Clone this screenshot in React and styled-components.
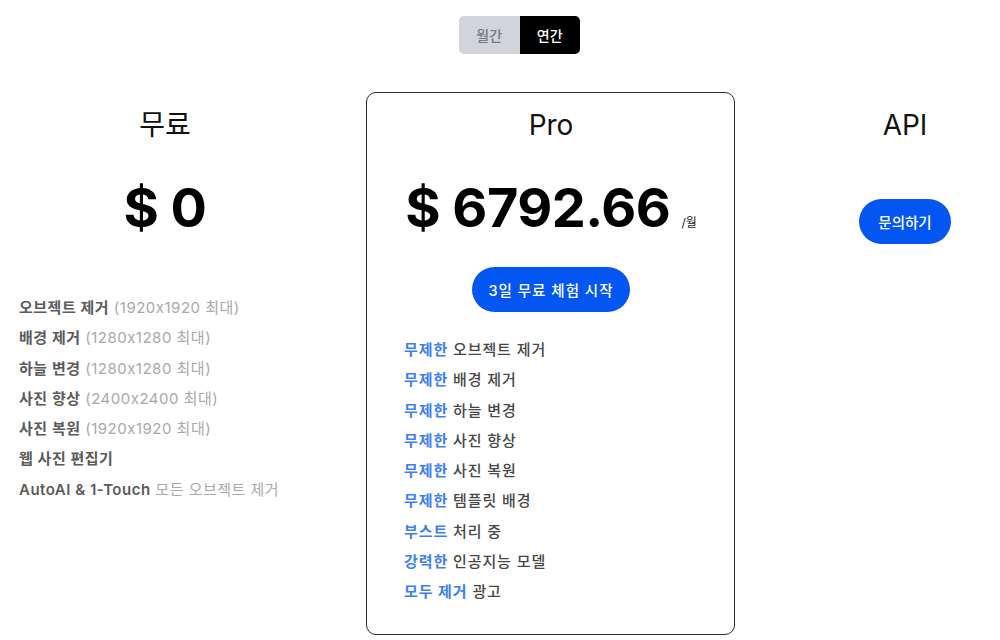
import React, { useState } from "react";
import styled, { createGlobalStyle } from "styled-components";

const GlobalStyle = createGlobalStyle`
  html, body {
    margin: 0;
    padding: 0;
    background: #ffffff;
    overflow: hidden;
  }
  body {
    font-family: Inter, "Noto Sans CJK KR", sans-serif;
    color: #111;
  }
`;

const StyledPage = styled.div`
  width: 1000px;
  height: 640px;
  padding-top: 16px;
  box-sizing: border-box;
  overflow: hidden;
`;

const StyledToggle = styled.div`
  display: flex;
  width: 121px;
  height: 38px;
  margin-left: 459px;
  border-radius: 5px;
  overflow: hidden;
`;

const StyledToggleItem = styled.div`
  flex: 1;
  display: flex;
  align-items: center;
  justify-content: center;
  font-size: 14px;
  font-weight: 500;
  background: ${(p) => (p.$active ? "#000" : "#d1d4da")};
  color: ${(p) => (p.$active ? "#fff" : "#777a80")};
  cursor: pointer;
`;

const StyledColumns = styled.div`
  display: flex;
  align-items: flex-start;
  margin-top: 38px;
`;

const StyledColumn = styled.div`
  width: ${(p) => p.$width}px;
  flex-shrink: 0;
  box-sizing: border-box;
  padding: 16px 0 0 ${(p) => p.$shift || 0}px;
  display: flex;
  flex-direction: column;
  align-items: center;
`;

const StyledCard = styled(StyledColumn)`
  margin-left: 36px;
  border: 1px solid #2b2b2b;
  border-radius: 10px;
  padding: 15px 36px 26px 37px;
`;

const StyledTitle = styled.h2`
  margin: 0;
  font-size: 28px;
  line-height: 34px;
  font-weight: 400;
  color: #111;
`;

const StyledPrice = styled.div`
  margin-top: 32px;
  height: 68px;
  display: flex;
  align-items: baseline;
  white-space: nowrap;
  font-size: 54px;
  line-height: 68px;
  font-weight: 700;
  color: #000;
  letter-spacing: -0.5px;
`;

const StyledPer = styled.span`
  font-size: 12px;
  line-height: 1;
  font-weight: 400;
  letter-spacing: 0;
  margin-left: 11px;
  color: #222;
`;

const StyledButton = styled.button`
  margin-top: ${(p) => p.$top}px;
  height: 45px;
  padding: 0 ${(p) => p.$pad}px;
  border: none;
  border-radius: 23px;
  background: #0356f2;
  color: #fff;
  font-family: inherit;
  font-size: 14.5px;
  font-weight: 500;
  letter-spacing: ${(p) => p.$spacing || 0}px;
  white-space: nowrap;
  cursor: pointer;
`;

const StyledList = styled.ul`
  list-style: none;
  margin: ${(p) => p.$top}px 0 0;
  padding: 0;
  align-self: stretch;
  padding-left: ${(p) => p.$left || 0}px;
`;

const StyledItem = styled.li`
  font-size: 15px;
  line-height: 30.3px;
  letter-spacing: ${(p) => (p.$pro ? 0.9 : 0.5)}px;
  white-space: nowrap;
  color: ${(p) => (p.$pro ? "#474747" : "#a9a9a9")};
  font-weight: ${(p) => (p.$pro ? 500 : 400)};
  b {
    font-weight: 600;
    color: ${(p) => (p.$pro ? "#3d80f0" : "#5b5b5b")};
  }
`;

const freeFeatures = [
  ["오브젝트 제거", " (1920x1920 최대)"],
  ["배경 제거", " (1280x1280 최대)"],
  ["하늘 변경", " (1280x1280 최대)"],
  ["사진 향상", " (2400x2400 최대)"],
  ["사진 복원", " (1920x1920 최대)"],
  ["웹 사진 편집기", ""],
  ["AutoAI & 1-Touch", " 모든 오브젝트 제거"],
];

const proFeatures = [
  ["무제한", " 오브젝트 제거"],
  ["무제한", " 배경 제거"],
  ["무제한", " 하늘 변경"],
  ["무제한", " 사진 향상"],
  ["무제한", " 사진 복원"],
  ["무제한", " 템플릿 배경"],
  ["부스트", " 처리 중"],
  ["강력한", " 인공지능 모델"],
  ["모두 제거", " 광고"],
];

export default function App() {
  const [period, setPeriod] = useState("year");
  return (
    <StyledPage>
      <GlobalStyle />
      <StyledToggle>
        <StyledToggleItem
          $active={period === "month"}
          onClick={() => setPeriod("month")}
        >
          월간
        </StyledToggleItem>
        <StyledToggleItem
          $active={period === "year"}
          onClick={() => setPeriod("year")}
        >
          연간
        </StyledToggleItem>
      </StyledToggle>
      <StyledColumns>
        <StyledColumn $width={330}>
          <StyledTitle>무료</StyledTitle>
          <StyledPrice>$ 0</StyledPrice>
          <StyledList $top={51} $left={19}>
            {freeFeatures.map(([bold, rest]) => (
              <StyledItem key={bold}>
                <b>{bold}</b>
                {rest}
              </StyledItem>
            ))}
          </StyledList>
        </StyledColumn>
        <StyledCard $width={369}>
          <StyledTitle>Pro</StyledTitle>
          <StyledPrice>
            $ 6792.66<StyledPer>/월</StyledPer>
          </StyledPrice>
          <StyledButton $top={25} $pad={16} $spacing={1}>
            3일 무료 체험 시작
          </StyledButton>
          <StyledList $top={23}>
            {proFeatures.map(([bold, rest], i) => (
              <StyledItem $pro key={i}>
                <b>{bold}</b>
                {rest}
              </StyledItem>
            ))}
          </StyledList>
        </StyledCard>
        <StyledColumn $width={265} $shift={75}>
          <StyledTitle>API</StyledTitle>
          <StyledButton $top={57} $pad={19}>
            문의하기
          </StyledButton>
        </StyledColumn>
      </StyledColumns>
    </StyledPage>
  );
}
